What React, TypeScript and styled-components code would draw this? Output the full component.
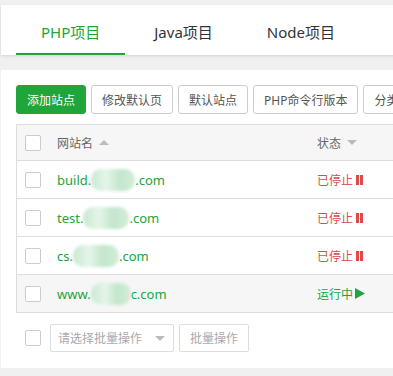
import styled, { createGlobalStyle } from "styled-components";

const GlobalStyle = createGlobalStyle`
  html, body {
    margin: 0;
    padding: 0;
    background: #f0f0f0;
    overflow: hidden;
  }
  body {
    font-family: "Noto Sans", "Noto Sans CJK SC", sans-serif;
    color: #333;
  }
`;

const Page = styled.div`
  width: 440px;
  padding: 5px 0 0 1px;
`;

const TabCard = styled.div`
  background: #fff;
  height: 50px;
  box-shadow: 0 1px 3px rgba(0, 0, 0, 0.12);
  display: flex;
  padding-left: 15px;
  gap: 4px;
`;

const Tab = styled.div<{ $active?: boolean }>`
  display: flex;
  align-items: center;
  padding: 0 25px;
  font-size: 15px;
  color: ${p => (p.$active ? "#20a53a" : "#333")};
  border-bottom: 2px solid ${p => (p.$active ? "#20a53a" : "transparent")};
  box-sizing: border-box;
  height: 50px;
  padding-top: 4px;
`;

const Card = styled.div`
  background: #fff;
  margin-top: 15px;
  padding: 15px 0 16px 15px;
`;

const Toolbar = styled.div`
  display: flex;
  gap: 5px;
  margin-bottom: 10px;
  white-space: nowrap;
`;

const Button = styled.button<{ $primary?: boolean }>`
  height: 29px;
  padding: 0 10px;
  font-family: inherit;
  font-size: 12px;
  border-radius: 3px;
  border: 1px solid ${p => (p.$primary ? "#20a53a" : "#ccc")};
  background: ${p => (p.$primary ? "#20a53a" : "#fff")};
  color: ${p => (p.$primary ? "#fff" : "#555")};
  flex-shrink: 0;
`;

const Table = styled.div`
  border: 1px solid #ddd;
  border-right: none;
  border-bottom: none;
`;

const Row = styled.div<{ $head?: boolean; $hover?: boolean }>`
  display: grid;
  grid-template-columns: 40px 260px 1fr;
  align-items: center;
  height: ${p => (p.$head ? "35px" : "37px")};
  border-bottom: 1px solid #ddd;
  background: ${p => (p.$head || p.$hover ? "#f6f6f6" : "#fff")};
  font-size: 12px;
  color: ${p => (p.$head ? "#666" : "#333")};
`;

const Check = styled.span`
  display: block;
  width: 14px;
  height: 14px;
  border: 1px solid #ccc;
  border-radius: 2px;
  background: #fff;
  margin-left: 8px;
`;

const HeadCell = styled.div`
  display: flex;
  align-items: center;
  gap: 6px;
`;

const Caret = styled.span<{ $up?: boolean }>`
  width: 0;
  height: 0;
  border-left: 5px solid transparent;
  border-right: 5px solid transparent;
  ${p => (p.$up ? "border-bottom: 5px solid #bbb;" : "border-top: 5px solid #bbb;")}
`;

const Site = styled.div`
  display: flex;
  align-items: center;
  color: #20a53a;
  font-size: 13px;
`;

const Blur = styled.span<{ $w: number }>`
  display: inline-block;
  width: ${p => p.$w}px;
  height: 22px;
  background: linear-gradient(90deg, #c8e9d0, #e6f5e9 35%, #c2e6cb 65%, #d2eed9);
  border-radius: 10px;
  filter: blur(1.5px);
`;

const Status = styled.div<{ $on?: boolean }>`
  display: flex;
  align-items: center;
  gap: 2px;
  color: ${p => (p.$on ? "#20a53a" : "#dd4a4a")};
`;

const Footer = styled.div`
  display: flex;
  align-items: center;
  gap: 5px;
  margin-top: 11px;
  padding-left: 9px;
`;

const FootCheck = styled(Check)`
  margin-left: 0;
  margin-right: 4px;
`;

const Select = styled.div`
  width: 124px;
  height: 28px;
  box-sizing: border-box;
  border: 1px solid #ddd;
  border-radius: 2px;
  display: flex;
  align-items: center;
  justify-content: space-between;
  padding: 0 8px 0 7px;
  font-size: 12px;
  color: #aaa;
`;

const GhostButton = styled.div`
  height: 28px;
  box-sizing: border-box;
  border: 1px solid #ddd;
  border-radius: 2px;
  padding: 0 10px;
  display: flex;
  align-items: center;
  font-size: 12px;
  color: #aaa;
`;

const PauseIcon = () => (
  <svg width="9" height="10" viewBox="0 0 9 10">
    <rect x="1" y="0" width="3" height="10" fill="#dd4a4a" />
    <rect x="5" y="0" width="3" height="10" fill="#dd4a4a" />
  </svg>
);

const PlayIcon = () => (
  <svg width="10" height="11" viewBox="0 0 10 11">
    <polygon points="0,0 10,5.5 0,11" fill="#20a53a" />
  </svg>
);

const sites = [
  { pre: "build.", blur: 44, post: ".com", on: false },
  { pre: "test.", blur: 46, post: ".com", on: false },
  { pre: "cs.", blur: 46, post: ".com", on: false },
  { pre: "www.", blur: 40, post: "c.com", on: true },
];

export default function App() {
  return (
    <Page>
      <GlobalStyle />
      <TabCard>
        <Tab $active>PHP项目</Tab>
        <Tab>Java项目</Tab>
        <Tab>Node项目</Tab>
      </TabCard>
      <Card>
        <Toolbar>
          <Button $primary>添加站点</Button>
          <Button>修改默认页</Button>
          <Button>默认站点</Button>
          <Button>PHP命令行版本</Button>
          <Button>分类设置</Button>
        </Toolbar>
        <Table>
          <Row $head>
            <Check />
            <HeadCell>
              网站名 <Caret $up />
            </HeadCell>
            <HeadCell>
              状态 <Caret />
            </HeadCell>
          </Row>
          {sites.map(s => (
            <Row key={s.pre} $hover={s.on}>
              <Check />
              <Site>
                {s.pre}
                <Blur $w={s.blur} />
                {s.post}
              </Site>
              <Status $on={s.on}>
                {s.on ? "运行中" : "已停止"}
                {s.on ? <PlayIcon /> : <PauseIcon />}
              </Status>
            </Row>
          ))}
        </Table>
        <Footer>
          <FootCheck />
          <Select>
            请选择批量操作 <Caret />
          </Select>
          <GhostButton>批量操作</GhostButton>
        </Footer>
      </Card>
    </Page>
  );
}
